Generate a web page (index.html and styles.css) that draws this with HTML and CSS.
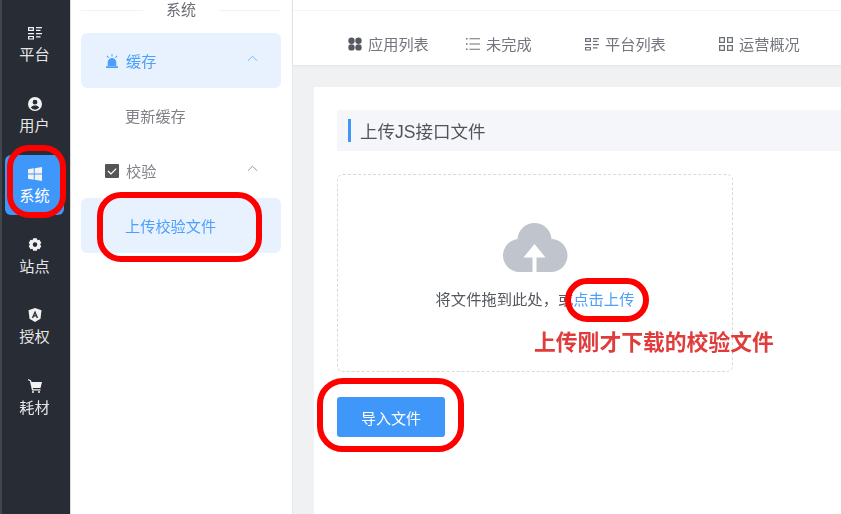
FILE: index.html
```html
<!DOCTYPE html>
<html lang="zh-CN">
  <head>
    <meta charset="UTF-8" />
    <title>上传校验文件</title>
    <link rel="stylesheet" href="styles.css">
  </head>
  <body>
    <div class="layout">
      <nav class="rail">
        <a class="rail-item">
          <svg viewBox="0 0 14 14"><path fill-rule="evenodd" d="M0 1h6v4H0zm1.200 1.200v1.600h3.600V2.200zM8 1h6v1.300H8zM8 3.700h4.500V5H8zM0 7h6v1.300H0zM8 7h6v1.300H8zM0 10h6v3.500H0zm1.200 1.100v1.300h3.600v-1.300zM8 10.200h4.500v1.300H8z"/></svg>
          <span>平台</span>
        </a>
        <a class="rail-item">
          <svg viewBox="0 0 14 14"><path fill-rule="evenodd" d="M7 0a7 7 0 1 0 0 14A7 7 0 0 0 7 0zm0 2.800a2.400 2.400 0 1 1 0 4.800 2.400 2.400 0 0 1 0-4.800zM2.800 10.600c.8-1.500 2.400-2.100 4.200-2.100s3.400.6 4.200 2.100a5.300 5.300 0 0 1-8.400 0z"/></svg>
          <span>用户</span>
        </a>
        <a class="rail-item active">
          <svg viewBox="0 0 14 14"><path d="M0 2.200 5.800 1.300v5.300H0zM6.700 1.200 14 0v6.600H6.700zM0 7.500h5.800v5.200L0 11.800zM6.700 7.500H14V14l-7.300-1.200z"/></svg>
          <span>系统</span>
        </a>
        <a class="rail-item">
          <svg viewBox="0 0 14 14"><path fill-rule="evenodd" d="M5.200.3h3.600l.7 1.900 2-.4 1.800 3.100-1.300 1.600 1.300 1.600-1.800 3.100-2-.4-.7 1.900H5.200l-.7-1.900-2 .4L.7 8.100 2 6.500.7 4.900l1.800-3.100 2 .4zM7 4.300a2.300 2.300 0 1 0 0 4.600 2.300 2.300 0 0 0 0-4.600z"/></svg>
          <span>站点</span>
        </a>
        <a class="rail-item">
          <svg viewBox="0 0 14 14"><path fill-rule="evenodd" d="M7 0l6.500 2.200-1 8.600L7 14l-5.500-3.200-1-8.600zM7 2.600 3.800 10h1.500l.6-1.600h2.200l.6 1.600h1.500zM7 5.400l.6 1.800H6.400z"/></svg>
          <span>授权</span>
        </a>
        <a class="rail-item">
          <svg viewBox="0 0 14 14"><path d="M0 0l3 1.200.5 1.800H14l-1.500 6H4.800l.3 1.300h7.400v1.200H4L1.900 2 0 1.200z"/><circle cx="5" cy="13" r="1"/><circle cx="11" cy="13" r="1"/></svg>
          <span>耗材</span>
        </a>
      </nav>

      <aside class="side">
        <div class="side-title"><span>系统</span></div>
        <div class="menu-row current">
          <svg class="menu-icon" viewBox="0 0 14 14"><path d="M7 4a4.300 4.300 0 0 1 4.300 4.300V12H2.700V8.300A4.300 4.300 0 0 1 7 4zM1 12.300h12V14H1zM6.500 0h1v2.500h-1zM1.500 2l.8-.6L4 3.300l-.8.6zM12.500 2l-.8-.6L10 3.300l.8.6z"/></svg>
          <span>缓存</span>
          <svg class="chevron" viewBox="0 0 12 7"><path d="M1 6l5-5 5 5"/></svg>
        </div>
        <div class="menu-sub">更新缓存</div>
        <div class="menu-row">
          <svg class="menu-icon" viewBox="0 0 14 14"><path fill-rule="evenodd" fill="#555" d="M1 0h12a1 1 0 0 1 1 1v12a1 1 0 0 1-1 1H1a1 1 0 0 1-1-1V1a1 1 0 0 1 1-1zm9.800 4.200L6 9 3.400 6.500l-.9.900L6 10.800l5.700-5.700z"/></svg>
          <span>校验</span>
          <svg class="chevron" viewBox="0 0 12 7"><path d="M1 6l5-5 5 5"/></svg>
        </div>
        <div class="menu-sub current">上传校验文件</div>
      </aside>

      <main class="main">
        <header class="top">
          <div class="top-strip"></div>
          <div class="tabs">
            <a class="tab tab-apps">
              <svg viewBox="0 0 14 14"><circle cx="3.500" cy="3.800" r="3.200"/><circle cx="10.500" cy="3.800" r="3.200"/><circle cx="3.500" cy="10.400" r="3.200"/><circle cx="10.500" cy="10.400" r="3.200"/></svg>
              应用列表
            </a>
            <a class="tab tab-todo">
              <svg viewBox="0 0 14 14"><path d="M0 1h1.500v1.500H0zM3.500 1.200H14v1.100H3.500zM0 6.200h1.500v1.500H0zM3.500 6.400H14v1.100H3.500zM0 11.500h1.500V13H0zM3.500 11.700H14v1.100H3.500z"/></svg>
              未完成
            </a>
            <a class="tab tab-platform">
              <svg viewBox="0 0 14 14"><path fill-rule="evenodd" d="M0 1h6v4H0zm1.200 1.200v1.600h3.600V2.200zM8 1h6v1.300H8zM8 3.700h4.500V5H8zM0 7h6v1.300H0zM8 7h6v1.300H8zM0 10h6v3.500H0zm1.200 1.100v1.300h3.600v-1.300zM8 10.200h4.500v1.300H8z"/></svg>
              平台列表
            </a>
            <a class="tab">
              <svg viewBox="0 0 14 14"><path fill-rule="evenodd" d="M0 0h6v6H0zm1.300 1.300v3.400h3.400V1.300zM8 0h6v6H8zm1.300 1.300v3.400h3.400V1.300zM0 8h6v6H0zm1.300 1.300v3.400h3.400V9.300zM8 8h6v6H8zm1.300 1.300v3.400h3.400V9.300z"/></svg>
              运营概况
            </a>
          </div>
        </header>

        <section class="card">
          <h2 class="section-title"><i></i>上传JS接口文件</h2>
          <div class="upload">
            <svg class="cloud" viewBox="0 0 65 49">
              <g fill="#c0c4cc">
                <circle cx="16.500" cy="32.500" r="16.500"/>
                <circle cx="48" cy="32.500" r="16.500"/>
                <circle cx="31.500" cy="17" r="17"/>
                <rect x="16" y="26" width="32" height="23"/>
              </g>
              <path fill="#fff" d="M31.500 21 20.500 34.500h9V49h4V34.500h9z"/>
            </svg>
            <p class="upload-text">将文件拖到此处，或<em>点击上传</em></p>
          </div>
          <button class="btn">导入文件</button>
        </section>
      </main>
    </div>

    <div class="note">上传刚才下载的校验文件</div>
    <div class="ring ring-nav"></div>
    <div class="ring ring-menu"></div>
    <div class="ring ring-link"></div>
    <div class="ring ring-btn"></div>
  </body>
</html>
```

FILE: styles.css
```css
:root {
  --rail: #282c34;
  --primary: #3f97f9;
  --soft: #e8f2fe;
  --grey: #808289;
}

* {
  box-sizing: border-box;
  margin: 0;
  padding: 0;
  font-family: "Liberation Sans", "Noto Sans CJK SC", sans-serif;
}

html,
body {
  width: 841px;
  height: 514px;
  overflow: hidden;
  background: #f0f1f2;
}

.layout {
  display: flex;
  width: 841px;
  height: 514px;
  filter: blur(0.4px);
}

/* left rail */
.rail {
  flex: none;
  width: 71px;
  padding: 14px 6px 0 5px;
  background: var(--rail);
  border-left: 2px solid #42464d;
  border-right: 1px solid #d8d8d8;
  display: flex;
  flex-direction: column;
  gap: 10.5px;
}

.rail-item {
  height: 60px;
  margin-left: -2px;
  padding-top: 12px;
  border-radius: 6px;
  display: flex;
  flex-direction: column;
  align-items: center;
  color: #e6e6e8;
  font-size: 15.2px;
  line-height: 22px;
}

.rail-item svg {
  flex: none;
  width: 14px;
  height: 14px;
  fill: #f2f2f3;
  margin-bottom: 4px;
}

.rail-item.active {
  background: var(--primary);
  color: #fff;
}

/* second menu */
.side {
  flex: none;
  width: 221px;
  padding: 0 11px 0 10px;
  background: #fff;
}

.side-title {
  display: flex;
  align-items: center;
  gap: 23px;
  height: 16px;
  margin-bottom: 17px;
  font-size: 15px;
  color: #6c6e75;
}

.side-title::before,
.side-title::after {
  content: "";
  flex: 1;
  height: 1px;
  margin-top: 4px;
  background: #f2f2f2;
}

.menu-row {
  display: flex;
  align-items: center;
  height: 55px;
  padding: 0 23px 2px 24px;
  border-radius: 6px;
  font-size: 15.2px;
  color: var(--grey);
}

.menu-row.current {
  background: var(--soft);
  color: #4c9ffb;
}

.menu-icon {
  width: 14px;
  height: 14px;
  margin: 2px 7px 0 0;
  fill: #4c9ffb;
}

.chevron {
  width: 11px;
  height: 7px;
  margin-left: auto;
  margin-top: -2px;
  fill: none;
  stroke: #8a8c92;
  stroke-width: 1;
}

.current .chevron {
  stroke: #6fb0fb;
}

.menu-sub {
  height: 55px;
  padding-left: 44px;
  border-radius: 6px;
  font-size: 15.2px;
  line-height: 57px;
  color: var(--grey);
}

.menu-sub.current {
  background: var(--soft);
  color: #4c9ffb;
}

/* right side */
.main {
  flex: 1;
  min-width: 0;
  border-left: 1px solid #e6e6e6;
}

.top {
  background: #fff;
  box-shadow: 0 1px 3px rgba(0, 0, 0, 0.06);
}

.top-strip {
  height: 11px;
  border-bottom: 1px solid #f5f5f5;
}

.tabs {
  display: flex;
  align-items: center;
  height: 54px;
  padding: 10px 0 0 55px;
}

.tab {
  display: flex;
  align-items: center;
  gap: 6px;
  width: 118px;
  font-size: 15.2px;
  color: #73767d;
}

.tab svg {
  flex: none;
  width: 14px;
  height: 14px;
  margin-top: 2px;
  fill: #6c7079;
}

.tab-apps svg {
  fill: #555962;
}

.tab-todo {
  width: 119px;
}

.tab-platform {
  width: 134px;
}

.card {
  margin: 22px 0 0 21px;
  height: 430px;
  padding: 23px 0 0 23px;
  background: #fff;
}

.section-title {
  display: flex;
  align-items: center;
  height: 41px;
  padding-left: 11px;
  background: #f4f6fa;
  font-size: 17.5px;
  font-weight: 400;
  color: #50535b;
}

.section-title i {
  width: 3px;
  height: 23px;
  margin-right: 9px;
  background: var(--primary);
}

.upload {
  width: 396px;
  height: 198px;
  margin-top: 23px;
  padding-top: 48px;
  border: 1px dashed #d9d9d9;
  border-radius: 6px;
  display: flex;
  flex-direction: column;
  align-items: center;
}

.cloud {
  flex: none;
  width: 65px;
  height: 49px;
}

.upload-text {
  margin-top: 17px;
  font-size: 15.3px;
  line-height: 22px;
  color: #55585f;
}

.upload-text em {
  font-style: normal;
  color: #4c9ffb;
}

.btn {
  display: block;
  width: 108px;
  height: 40px;
  margin-top: 25px;
  border: none;
  border-radius: 3px;
  background: var(--primary);
  color: #fff;
  font-size: 15px;
}

/* annotations on top of the screenshot */
.note {
  position: absolute;
  left: 534px;
  top: 329px;
  font-size: 21.8px;
  line-height: 28px;
  font-weight: 700;
  white-space: nowrap;
  color: #e03c3c;
  filter: blur(0.4px);
}

.ring {
  position: absolute;
  border: 6px solid #f00;
  filter: blur(0.4px);
}

.ring-nav {
  left: 7px;
  top: 145px;
  width: 59px;
  height: 73px;
  border-radius: 22px;
}

.ring-menu {
  left: 97px;
  top: 192px;
  width: 165px;
  height: 70px;
  border-radius: 24px;
}

.ring-link {
  left: 565px;
  top: 278px;
  width: 84px;
  height: 44px;
  border-radius: 22px;
}

.ring-btn {
  left: 317px;
  top: 378px;
  width: 147px;
  height: 74px;
  border-radius: 26px;
}
```
